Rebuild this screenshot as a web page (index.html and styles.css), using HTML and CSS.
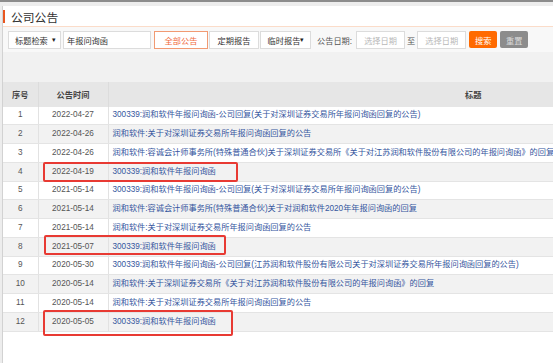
FILE: index.html
```html
<!DOCTYPE html>
<html>

<head>
    <title>公司公告</title>
    <link rel="stylesheet" href="styles.css">
</head>

<body>
    <div class="panel">
        <div class="title">公司公告</div>

        <div class="filter">
            <div class="box select w53">标题检索 <span class="caret">&#9662;</span></div>
            <div class="box w88 ml2">年报问询函</div>
            <div class="box tab active w54 ml3">全部公告</div>
            <div class="box tab w50 ml1">定期报告</div>
            <div class="box tab select w51 ml1">临时报告 <span class="caret">&#9662;</span></div>
            <span class="label">公告日期:</span>
            <div class="box date w49">选择日期</div>
            <span class="to">至</span>
            <div class="box date w49">选择日期</div>
            <button class="btn btn-search">搜索</button>
            <button class="btn btn-reset">重置</button>
        </div>

        <div class="spacer"></div>

        <div class="table-wrap">
            <table class="list">
                <colgroup>
                    <col class="c-no">
                    <col class="c-date">
                    <col class="c-title">
                </colgroup>
                <thead>
                    <tr>
                        <th>序号</th>
                        <th>公告时间</th>
                        <th>标题</th>
                    </tr>
                </thead>
                <tbody>
                    <tr><td>1</td><td>2022-04-27</td><td><a>300339:润和软件年报问询函-公司回复(关于对深圳证券交易所年报问询函回复的公告)</a></td></tr>
                    <tr><td>2</td><td>2022-04-26</td><td><a>润和软件:关于对深圳证券交易所年报问询函回复的公告</a></td></tr>
                    <tr><td>3</td><td>2022-04-26</td><td><a>润和软件:容诚会计师事务所(特殊普通合伙)关于深圳证券交易所《关于对江苏润和软件股份有限公司的年报问询函》的回复</a></td></tr>
                    <tr><td>4</td><td>2022-04-19</td><td><a>300339:润和软件年报问询函</a></td></tr>
                    <tr><td>5</td><td>2021-05-14</td><td><a>300339:润和软件年报问询函-公司回复(关于对深圳证券交易所年报问询函回复的公告)</a></td></tr>
                    <tr><td>6</td><td>2021-05-14</td><td><a>润和软件:容诚会计师事务所(特殊普通合伙)关于对润和软件2020年年报问询函的回复</a></td></tr>
                    <tr><td>7</td><td>2021-05-14</td><td><a>润和软件:关于对深圳证券交易所年报问询函回复的公告</a></td></tr>
                    <tr><td>8</td><td>2021-05-07</td><td><a>300339:润和软件年报问询函</a></td></tr>
                    <tr><td>9</td><td>2020-05-30</td><td><a>300339:润和软件年报问询函-公司回复(江苏润和软件股份有限公司关于对深圳证券交易所年报问询函回复的公告)</a></td></tr>
                    <tr><td>10</td><td>2020-05-14</td><td><a>润和软件:关于深圳证券交易所《关于对江苏润和软件股份有限公司的年报问询函》的回复</a></td></tr>
                    <tr><td>11</td><td>2020-05-14</td><td><a>润和软件:关于对深圳证券交易所年报问询函回复的公告</a></td></tr>
                    <tr><td>12</td><td>2020-05-05</td><td><a>300339:润和软件年报问询函</a></td></tr>
                </tbody>
            </table>

            <!-- hand drawn highlight boxes -->
            <div class="mark mark-4"></div>
            <div class="mark mark-8"></div>
            <div class="mark mark-12"></div>
        </div>
    </div>
</body>

</html>
```

FILE: styles.css
```css
body {
    margin: 0;
    height: 361px;
    overflow: hidden;
    background-color: #ededed;
    border-top: 2px solid #8c8c8c;
    font-family: "Liberation Sans", "Noto Sans CJK SC", sans-serif;
    color: #333;
}

.panel {
    margin: 4px 0 0 2px;
    height: 357px;
    overflow: hidden;
    background-color: #fff;
    border-left: 1px solid #d2d2d2;
}

.title {
    display: flex;
    align-items: center;
    height: 20px;
    font-size: 11.8px;
    color: #333;
    border-bottom: 1px solid #fbdcc9;
}

.title::before {
    content: "";
    width: 2px;
    height: 13px;
    margin-right: 6px;
    background-color: #e9561f;
}

/* filter row */
.filter {
    display: flex;
    align-items: center;
    height: 25px;
    padding-left: 5px;
    background-color: #f8f8f8;
    font-size: 8.2px;
}

.box {
    box-sizing: border-box;
    display: flex;
    align-items: center;
    height: 18px;
    padding: 0 3px;
    background-color: #fff;
    border: 1px solid #dcdcdc;
    color: #333;
    white-space: nowrap;
}

.select {
    justify-content: space-between;
    padding: 0 4px 0 6px;
}

.tab.select {
    padding: 0 3px 0 4px;
}

.caret {
    font-size: 7px;
    color: #222;
}

.tab {
    justify-content: center;
}

.tab.active {
    border-color: #f19a73;
    color: #f06a3c;
}

.date {
    justify-content: center;
    color: #b8b8b8;
}

.w49 { width: 49px; }
.w50 { width: 50px; }
.w51 { width: 51px; }
.w53 { width: 53px; }
.w54 { width: 54px; }
.w88 { width: 88px; }
.ml1 { margin-left: 1px; }
.ml2 { margin-left: 2px; }
.ml3 { margin-left: 3px; }

.label {
    margin: 0 4px 0 6px;
    color: #555;
}

.to {
    margin: 0 2px;
    color: #555;
}

.btn {
    height: 17px;
    width: 28px;
    margin-left: 3px;
    padding: 0;
    border: none;
    border-radius: 2px;
    font-family: inherit;
    font-size: 8.2px;
}

.btn-search {
    background-color: #ff6a00;
    color: #fff;
}

.btn-reset {
    background-color: #8c8c8c;
    color: #dadada;
}

.spacer {
    height: 30px;
    background-color: #f1f1f1;
}

/* table */
.table-wrap {
    position: relative;
}

.list {
    width: 835px;
    table-layout: fixed;
    border-collapse: collapse;
    font-size: 8.2px;
}

.c-no { width: 35px; }
.c-date { width: 70px; }
.c-title { width: 730px; }

.list th {
    height: 24.5px;
    padding: 0;
    background-color: #e6e6e6;
    color: #444;
    font-weight: bold;
    text-align: center;
    border-left: 1px solid #dcdcdc;
}

.list td {
    height: 17.75px;
    padding: 0;
    line-height: 12px;
    text-align: center;
    color: #555;
    border-left: 1px solid #e2e2e2;
    border-bottom: 1px solid #e4e4e4;
    white-space: nowrap;
    overflow: hidden;
}

.list th:first-child,
.list td:first-child {
    border-left: none;
}

.list td:last-child {
    text-align: left;
    padding-left: 4px;
}

.list tbody tr:nth-child(even) td {
    background-color: #f2f2f2;
}

.list a {
    color: #35569e;
}

.mark {
    position: absolute;
    box-sizing: border-box;
    border: 2px solid #e83a33;
    border-radius: 2px;
}

.mark-4 {
    left: 40px;
    top: 80px;
    width: 195px;
    height: 20px;
}

.mark-8 {
    left: 41px;
    top: 153px;
    width: 182px;
    height: 20px;
}

.mark-12 {
    left: 40px;
    top: 228px;
    width: 190px;
    height: 26px;
}
```
